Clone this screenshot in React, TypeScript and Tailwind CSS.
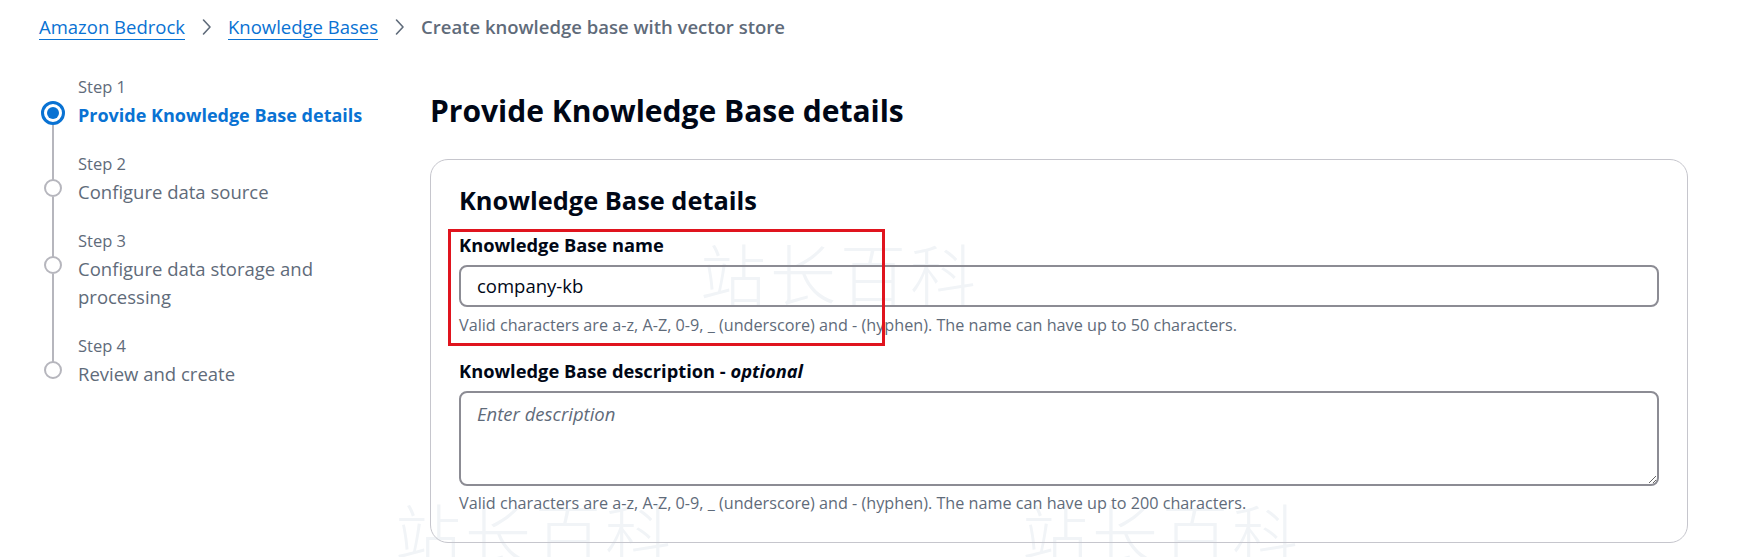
const steps = [
  { label: "Step 1", title: "Provide Knowledge Base details", active: true },
  { label: "Step 2", title: "Configure data source" },
  { label: "Step 3", title: "Configure data storage and processing" },
  { label: "Step 4", title: "Review and create" },
];

const Chevron = () => (
  <svg className="h-[18px] w-[11px] text-[#5f6b7a]" viewBox="0 0 11 18" fill="none" stroke="currentColor">
    <path strokeWidth="1.6" strokeLinecap="round" strokeLinejoin="round" d="M2.5 2l6.5 7-6.5 7" />
  </svg>
);

const Watermark = ({ className }: { className: string }) => (
  <div
    className={`pointer-events-none absolute select-none font-['Noto_Sans_CJK_SC',sans-serif] text-[66px] font-light leading-none tracking-[4px] text-[#f1f4f7] ${className}`}
  >
    站长百科
  </div>
);

const App = () => {
  return (
    <div className="relative min-h-[557px] w-full overflow-hidden bg-white font-['Open_Sans',sans-serif] text-[#000716]">
      <Watermark className="left-[700px] top-[238px]" />
      <Watermark className="left-[395px] top-[498px]" />
      <Watermark className="left-[1022px] top-[498px]" />

      <div className="relative">
        {/* breadcrumb */}
        <div className="flex items-center gap-[16px] pl-[39px] pt-[13px] text-[18.5px] leading-[28px]">
          <a className="text-[#0972d3] underline decoration-1 underline-offset-[5px]">Amazon Bedrock</a>
          <Chevron />
          <a className="text-[#0972d3] underline decoration-1 underline-offset-[5px]">Knowledge Bases</a>
          <Chevron />
          <span className="font-semibold text-[#5f6b7a]">Create knowledge base with vector store</span>
        </div>

        <div className="mt-[32px] flex">
          {/* wizard steps */}
          <nav className="w-[430px] shrink-0 pl-[41px]">
            {steps.map((step, i) => (
              <div key={i} className="flex gap-[13px]">
                <div className="flex w-[24px] flex-col items-center">
                  <div className={`h-[44px] w-[2px] flex-none ${i === 0 ? "" : "bg-[#b6b6bd]"}`} />
                  {step.active ? (
                    <div className="-mt-[16px] flex h-[24px] w-[24px] flex-none items-center justify-center rounded-full border-[3px] border-[#0972d3] bg-white">
                      <div className="h-[12px] w-[12px] rounded-full bg-[#0972d3]" />
                    </div>
                  ) : (
                    <div className="-mt-[15px] h-[18px] w-[18px] flex-none rounded-full border-2 border-[#b6b6bd] bg-white" />
                  )}
                  {i < steps.length - 1 && <div className="w-[2px] flex-1 bg-[#b6b6bd]" />}
                </div>
                <div className="pb-[21px] leading-[28px]">
                  <div className="text-[16.5px] text-[#5f6b7a]">{step.label}</div>
                  <div
                    className={
                      step.active
                        ? "whitespace-nowrap text-[18px] font-bold text-[#0972d3]"
                        : "w-[265px] text-[18.5px] text-[#5f6b7a]"
                    }
                  >
                    {step.title}
                  </div>
                </div>
              </div>
            ))}
          </nav>

          {/* main */}
          <main className="flex-1 pr-[56px]">
            <h1 className="mt-[18px] text-[30px] font-bold leading-[40px]">Provide Knowledge Base details</h1>

            <section className="relative mt-[28px] rounded-[18px] border border-[#c6c6cd] px-[28px] pb-[27px] pt-[24px]">
              <h2 className="text-[25.4px] font-bold leading-[32px]">Knowledge Base details</h2>

              <div className="mt-[16px]">
                <label className="block text-[18.3px] font-bold leading-[26px]">Knowledge Base name</label>
                <div className="mt-[7px] flex h-[42px] items-center rounded-[8px] border-2 border-[#8c8c94] px-[16px] text-[18.5px]">
                  company-kb
                </div>
                <p className="mt-[6px] text-[16.2px] leading-[24px] text-[#5f6b7a]">
                  Valid characters are a-z, A-Z, 0-9, _ (underscore) and - (hyphen). The name can have up to 50 characters.
                </p>
              </div>

              <div className="mt-[21px]">
                <label className="block text-[18.3px] font-bold leading-[26px]">
                  Knowledge Base description - <i>optional</i>
                </label>
                <textarea
                  readOnly
                  placeholder="Enter description"
                  className="mt-[7px] block h-[95px] w-full resize-y rounded-[8px] border-2 border-[#8c8c94] bg-transparent px-[16px] py-[7px] text-[18.5px] italic outline-none placeholder:text-[#5f6b7a]"
                />
                <p className="mt-[5px] text-[16.2px] leading-[24px] text-[#5f6b7a]">
                  Valid characters are a-z, A-Z, 0-9, _ (underscore) and - (hyphen). The name can have up to 200 characters.
                </p>
              </div>

              {/* annotation box */}
              <div className="pointer-events-none absolute left-[17px] top-[69px] h-[117px] w-[437px] border-[3px] border-[#e0141e]" />
            </section>
          </main>
        </div>
      </div>
    </div>
  );
};

export default App;
